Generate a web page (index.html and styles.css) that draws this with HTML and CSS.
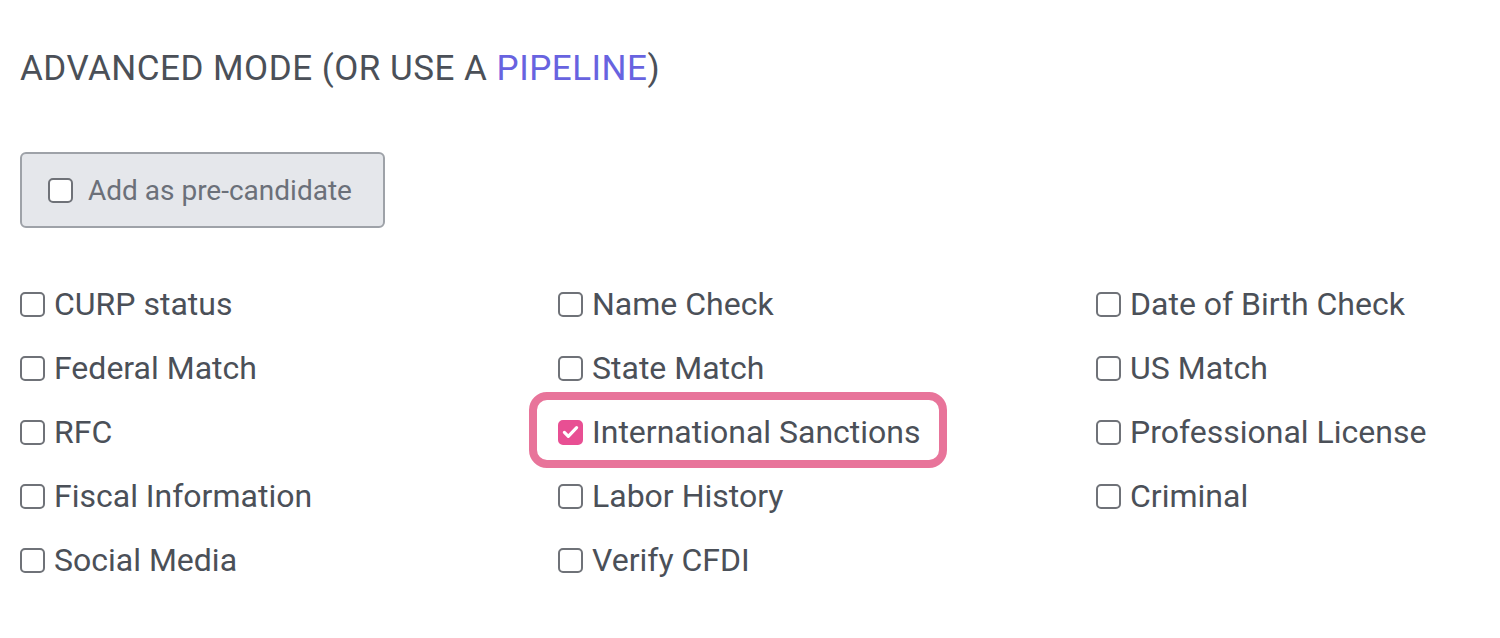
FILE: index.html
```html
<!DOCTYPE html>
<html lang="en">
<head>
<meta charset="utf-8">
<title>Advanced mode</title>
<link rel="stylesheet" href="styles.css">
</head>
<body>
<main class="panel">
  <h2 class="title">ADVANCED MODE (OR USE A <a class="link" href="#">PIPELINE</a>)</h2>

  <label class="pre-btn">
    <span class="box"></span>
    <span class="pre-text">Add as pre-candidate</span>
  </label>

  <div class="checks">
    <label class="check"><span class="box"></span><span>CURP status</span></label>
    <label class="check"><span class="box"></span><span>Name Check</span></label>
    <label class="check"><span class="box"></span><span>Date of Birth Check</span></label>

    <label class="check"><span class="box"></span><span>Federal Match</span></label>
    <label class="check"><span class="box"></span><span>State Match</span></label>
    <label class="check"><span class="box"></span><span>US Match</span></label>

    <label class="check"><span class="box"></span><span>RFC</span></label>
    <label class="check highlighted"><span class="box checked"><svg viewBox="0 0 24 24" width="22" height="22"><path d="M5 12.5l4.5 4.5L19 7" fill="none" stroke="#fff" stroke-width="3.6" stroke-linecap="round" stroke-linejoin="round"/></svg></span><span>International Sanctions</span><span class="ring"></span></label>
    <label class="check"><span class="box"></span><span>Professional License</span></label>

    <label class="check"><span class="box"></span><span>Fiscal Information</span></label>
    <label class="check"><span class="box"></span><span>Labor History</span></label>
    <label class="check"><span class="box"></span><span>Criminal</span></label>

    <label class="check"><span class="box"></span><span>Social Media</span></label>
    <label class="check"><span class="box"></span><span>Verify CFDI</span></label>
  </div>
</main>
</body>
</html>
```

FILE: styles.css
```css
html, body {
  margin: 0;
  padding: 0;
  background: #ffffff;
}

body {
  font-family: Roboto, "Liberation Sans", Arial, sans-serif;
  color: #4b5058;
  overflow: hidden;
}

.panel {
  padding: 49px 0 0 20px;
}

.title {
  margin: 0;
  font-size: 35px;
  font-weight: 400;
  line-height: 40px;
  color: #4b5058;
  letter-spacing: 0.5px;
}

.link {
  color: #6863e0;
  text-decoration: none;
}

.pre-btn {
  margin-top: 63px;
  box-sizing: border-box;
  width: 365px;
  height: 76px;
  display: flex;
  align-items: center;
  gap: 15px;
  padding-left: 26px;
  background: #e5e7eb;
  border: 2px solid #9ea2a8;
  border-radius: 6px;
}

.pre-text {
  font-size: 28px;
  color: #6b7079;
}

.box {
  box-sizing: border-box;
  flex: none;
  width: 25px;
  height: 25px;
  border: 2px solid #6f7278;
  border-radius: 5px;
  background: #ffffff;
  display: flex;
  align-items: center;
  justify-content: center;
}

.box.checked {
  background: #e84f93;
  border-color: #e84f93;
}

.checks {
  margin-top: 56px;
  display: grid;
  grid-template-columns: repeat(3, 538px);
  grid-auto-rows: 40px;
  row-gap: 24px;
}

.check {
  display: flex;
  align-items: center;
  gap: 9px;
  font-size: 32px;
  color: #4b5058;
  position: relative;
  width: max-content;
}

.ring {
  position: absolute;
  left: -29px;
  top: -20px;
  right: -26px;
  bottom: -16px;
  border: 8px solid #e8749a;
  border-radius: 18px;
  pointer-events: none;
}
```
